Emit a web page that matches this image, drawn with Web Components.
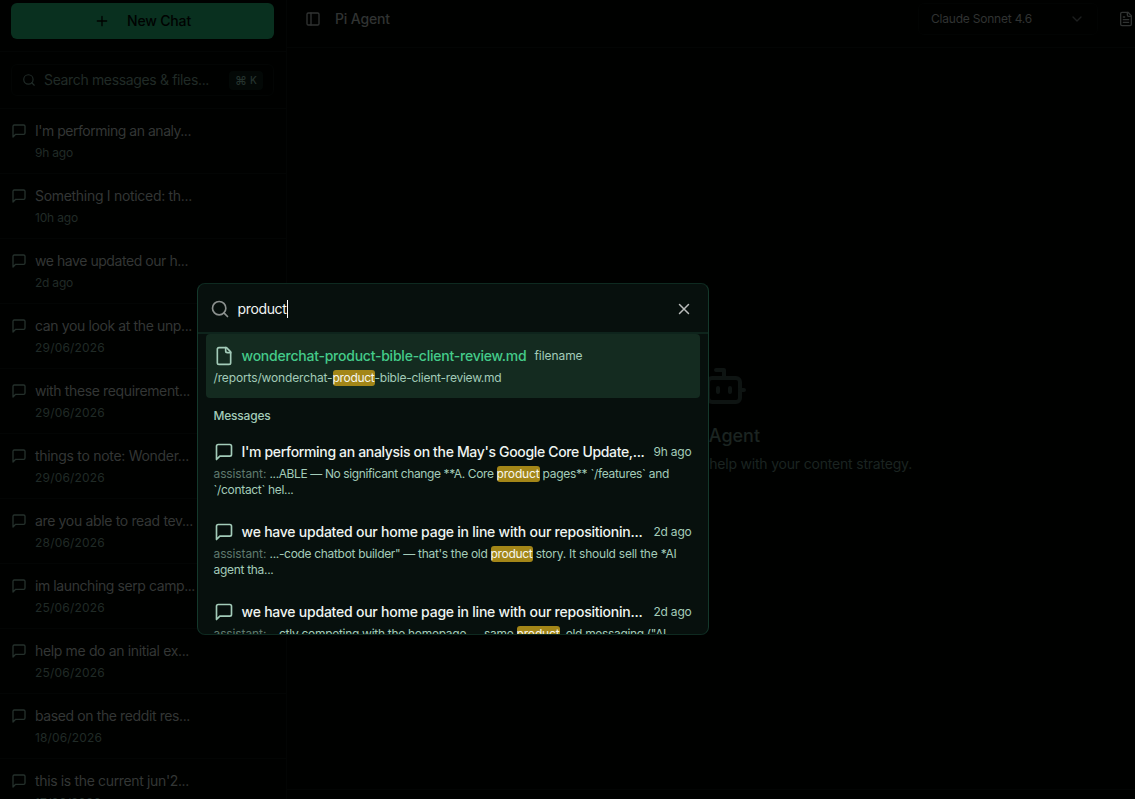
<!DOCTYPE html>
<html lang="en">
<head>
<meta charset="utf-8">
<title>Pi Agent</title>
<style>
  html, body {
    margin: 0;
    height: 100%;
    overflow: hidden;
    background: #000100;
    font-family: Inter, "Liberation Sans", sans-serif;
    font-size: 14px;
    line-height: 20px;
  }
</style>
</head>
<body>
<chat-app></chat-app>

<script>
const ICONS = {
  plus: '<path d="M5 12h14M12 5v14"/>',
  search: '<circle cx="11" cy="11" r="8"/><path d="m21 21-4.3-4.3"/>',
  message: '<path d="M21 15a2 2 0 0 1-2 2H7l-4 4V5a2 2 0 0 1 2-2h14a2 2 0 0 1 2 2z"/>',
  panel: '<rect width="18" height="18" x="3" y="3" rx="2"/><path d="M9 3v18"/>',
  chevron: '<path d="m6 9 6 6 6-6"/>',
  file: '<path d="M15 2H6a2 2 0 0 0-2 2v16a2 2 0 0 0 2 2h12a2 2 0 0 0 2-2V7Z"/><path d="M14 2v4a2 2 0 0 0 2 2h4"/>',
  doc: '<path d="M15 2H6a2 2 0 0 0-2 2v16a2 2 0 0 0 2 2h12a2 2 0 0 0 2-2V7Z"/><path d="M14 2v4a2 2 0 0 0 2 2h4M10 9H8M16 13H8M16 17H8"/>',
  close: '<path d="M18 6 6 18M6 6l12 12"/>',
  bot: '<path d="M12 8V4H8"/><rect width="16" height="12" x="4" y="8" rx="2"/><path d="M2 14h2M20 14h2M15 13v2M9 13v2"/>'
};

class UiIcon extends HTMLElement {
  constructor() {
    super();
    this.attachShadow({ mode: 'open' });
  }

  connectedCallback() {
    const size = this.getAttribute('size') || 16;
    this.shadowRoot.innerHTML = `
      <style>
        :host { display: block; flex: none; width: ${size}px; height: ${size}px; }
        svg { display: block; }
      </style>
      <svg width="${size}" height="${size}" viewBox="0 0 24 24" fill="none" stroke="currentColor"
        stroke-width="2" stroke-linecap="round" stroke-linejoin="round">${ICONS[this.getAttribute('name')]}</svg>
    `;
  }
}

// A run of text tracked in or out so that it fills its width
class FitText extends HTMLElement {
  constructor() {
    super();
    this.attachShadow({ mode: 'open' });
    this.shadowRoot.innerHTML = `
      <style>
        :host { display: block; flex: none; }
        span { display: inline-block; vertical-align: top; margin-left: var(--nudge, 0); white-space: pre; }
      </style>
      <span><slot></slot></span>
    `;
  }

  connectedCallback() {
    const width = parseFloat(this.getAttribute('w'));
    this.style.width = width + 'px';
    const natural = this.shadowRoot.querySelector('span').getBoundingClientRect().width;
    const count = this.textContent.length;
    this.style.letterSpacing = (width - natural) / count + 'px';
  }
}

class ChatRow extends HTMLElement {
  constructor() {
    super();
    this.attachShadow({ mode: 'open' });
  }

  connectedCallback() {
    this.shadowRoot.innerHTML = `
      <style>
        :host {
          display: flex;
          gap: 8px;
          padding: 12px 11px;
          border-bottom: 1px solid #030504;
          color: #333635;
        }
        ui-icon { margin-top: 2px; color: #24302b; }
        .when { margin-top: 4px; font-size: 12px; line-height: 16px; color: #202b27; }
      </style>
      <ui-icon name="message"></ui-icon>
      <div>
        <fit-text w="${this.getAttribute('tw')}">${this.getAttribute('label')}</fit-text>
        <fit-text class="when" w="${this.getAttribute('dw')}">${this.getAttribute('when')}</fit-text>
      </div>
    `;
  }
}

class ChatSidebar extends HTMLElement {
  constructor() {
    super();
    this.attachShadow({ mode: 'open' });
  }

  connectedCallback() {
    const chats = [
      ["I'm performing an analy...", 156, '9h ago', 38],
      ['Something I noticed: th...', 157, '10h ago', 43],
      ['we have updated our h...', 153, '2d ago', 38],
      ['can you look at the unp...', 157, '29/06/2026', 70],
      ['with these requirement...', 155, '29/06/2026', 70],
      ['things to note: Wonder...', 154, '29/06/2026', 70],
      ['are you able to read tev...', 158, '28/06/2026', 70],
      ['im launching serp camp...', 160, '25/06/2026', 70],
      ['help me do an initial ex...', 154, '25/06/2026', 70],
      ['based on the reddit res...', 155, '18/06/2026', 67],
      ["this is the current jun'2...", 154, '17/06/2026', 66]
    ];
    this.shadowRoot.innerHTML = `
      <style>
        :host {
          display: block;
          box-sizing: border-box;
          flex: none;
          width: 287px;
          border-right: 1px solid #030504;
          overflow: hidden;
        }
        .top { padding: 3px 12px 12px 11px; border-bottom: 1px solid #030504; }
        button {
          display: flex;
          align-items: center;
          justify-content: center;
          gap: 17px;
          width: 263px;
          height: 36px;
          padding: 0;
          border: 0;
          border-radius: 6px;
          background: #09301f;
          color: #000201;
          font: 500 14px/20px Inter, "Liberation Sans", sans-serif;
        }
        .find { padding: 12px 12px 12px 11px; border-bottom: 1px solid #030504; }
        .box {
          display: flex;
          align-items: center;
          box-sizing: border-box;
          height: 32px;
          padding: 0 10px;
          border: 1px solid #030504;
          border-radius: 6px;
          color: #202b27;
        }
        .box > fit-text { margin-left: 8px; }
        kbd {
          display: flex;
          align-items: center;
          justify-content: center;
          gap: 3px;
          width: 34px;
          height: 19px;
          margin-left: auto;
          border-radius: 4px;
          background: #030806;
          color: #25332e;
          font: 500 10px/19px Inter, "Liberation Sans", sans-serif;
        }
        .cmd { font-size: 12px; }
      </style>
      <div class="top">
        <button><ui-icon name="plus"></ui-icon><fit-text w="64">New Chat</fit-text></button>
      </div>
      <div class="find">
        <div class="box">
          <ui-icon name="search" size="14"></ui-icon>
          <fit-text w="165">Search messages &amp; files...</fit-text>
          <kbd><span class="cmd">⌘</span><span>K</span></kbd>
        </div>
      </div>
      ${chats.map(([label, tw, when, dw]) =>
        `<chat-row label="${label}" tw="${tw}" when="${when}" dw="${dw}"></chat-row>`).join('')}
    `;
  }
}

class ChatMain extends HTMLElement {
  constructor() {
    super();
    this.attachShadow({ mode: 'open' });
    this.shadowRoot.innerHTML = `
      <style>
        :host { display: flex; flex-direction: column; flex: none; width: 874px; }
        header {
          display: flex;
          align-items: center;
          box-sizing: border-box;
          height: 48px;
          padding: 0 27px 9px 18px;
          border-bottom: 1px solid #030504;
          color: #303332;
        }
        .name { margin-left: 14px; font-weight: 500; }
        .model {
          display: flex;
          align-items: center;
          justify-content: space-between;
          box-sizing: border-box;
          width: 180px;
          height: 32px;
          margin-left: auto;
          margin-right: 20px;
          padding: 0 12px;
          border: 1px solid #020403;
          border-radius: 6px;
          font-size: 12px;
        }
        .model ui-icon { color: #1c1f1e; }
        .empty {
          display: flex;
          flex-direction: column;
          align-items: center;
          flex: 1;
          padding-top: 314px;
          color: #1b2421;
        }
        .empty ui-icon { color: #0e1412; }
        h2 { margin: 12px 0 4px; font: 500 18px/28px Inter, "Liberation Sans", sans-serif; }
        footer { height: 9px; border-top: 1px solid #030504; }
      </style>
      <header>
        <ui-icon name="panel"></ui-icon>
        <fit-text class="name" w="55">Pi Agent</fit-text>
        <div class="model"><fit-text w="101">Claude Sonnet 4.6</fit-text><ui-icon name="chevron"></ui-icon></div>
        <ui-icon name="doc"></ui-icon>
      </header>
      <div class="empty">
        <ui-icon name="bot" size="48"></ui-icon>
        <h2><fit-text w="72">Pi Agent</fit-text></h2>
        <fit-text w="376">Start a conversation to get help with your content strategy.</fit-text>
      </div>
      <footer></footer>
    `;
  }
}

class SearchResult extends HTMLElement {
  constructor() {
    super();
    this.attachShadow({ mode: 'open' });
    this.shadowRoot.innerHTML = `
      <style>
        :host { display: block; padding: 12px 8px; border-radius: 4px; color: #a3ccb9; }
        :host([active]) { background: #142b20; }
        .head { display: flex; align-items: center; gap: 8px; height: 20px; }
        ::slotted([slot="title"]) { color: #eef4f1; font-weight: 500; }
        :host([active]) ::slotted([slot="title"]) { color: #44cb8a; }
        ::slotted([slot="meta"]) { font-size: 12px; line-height: 16px; }
        :host(:not([active])) ::slotted([slot="meta"]) { margin-left: auto; }
        .text { margin-top: 4px; font-size: 12px; line-height: 16px; }
      </style>
      <div class="head">
        <slot name="icon"></slot>
        <slot name="title"></slot>
        <slot name="meta"></slot>
      </div>
      <div class="text"><slot></slot></div>
    `;
  }
}

class SearchDialog extends HTMLElement {
  constructor() {
    super();
    this.attachShadow({ mode: 'open' });
    this.shadowRoot.innerHTML = `
      <style>
        /* floats over the dimmed app */
        :host {
          --nudge: -0.5px;
          position: absolute;
          left: 197px;
          top: 283px;
          display: flex;
          flex-direction: column;
          box-sizing: border-box;
          width: 512px;
          height: 352px;
          border: 1px solid #14382b;
          border-top-color: #0e2a20;
          border-bottom-color: #0e2a20;
          border-radius: 8px;
          background: #07100d;
          overflow: hidden;
        }
        .field {
          display: flex;
          align-items: center;
          box-sizing: border-box;
          flex: none;
          height: 50px;
          padding: 1px 15px 0 12px;
          border-bottom: 2px solid #0e241c;
          color: #8b908e;
        }
        .query { margin-left: 8px; color: #f0f4f2; }
        .caret { width: 1px; height: 18px; background: #fff; }
        .close { margin-left: auto; color: #b9bcbb; }
        .list { flex: 1; padding: 0 8px; overflow: hidden; }
        h3 { margin: 0; padding: 10px 8px 6px; font: 500 12px/16px Inter, "Liberation Sans", sans-serif; color: #a3ccb9; }
        .line { display: flex; }
        .dim { color: #5f7a6e; }
        mark { border-radius: 3px; background: #a38618; color: #f6f7ee; }
      </style>
      <div class="field">
        <ui-icon name="search" size="20"></ui-icon>
        <fit-text class="query" w="49">product</fit-text><span class="caret"></span>
        <ui-icon class="close" name="close" size="18"></ui-icon>
      </div>
      <div class="list">
        <search-result active>
          <ui-icon slot="icon" name="file" size="20"></ui-icon>
          <fit-text slot="title" w="285">wonderchat-product-bible-client-review.md</fit-text>
          <fit-text slot="meta" w="48">filename</fit-text>
          <div class="line"><fit-text w="119">/reports/wonderchat-</fit-text><mark><fit-text w="42">product</fit-text></mark><fit-text w="127">-bible-client-review.md</fit-text></div>
        </search-result>
        <h3><fit-text w="57">Messages</fit-text></h3>
        <search-result>
          <ui-icon slot="icon" name="message" size="20"></ui-icon>
          <fit-text slot="title" w="403">I'm performing an analysis on the May's Google Core Update,...</fit-text>
          <fit-text slot="meta" w="38">9h ago</fit-text>
          <div class="line"><fit-text class="dim" w="56">assistant: </fit-text><fit-text w="227">...ABLE — No significant change **A. Core </fit-text><mark><fit-text w="43">product</fit-text></mark><fit-text w="129.5"> pages** \`/features\` and</fit-text></div>
          <div class="line"><fit-text w="80">\`/contact\` hel...</fit-text></div>
        </search-result>
        <search-result>
          <ui-icon slot="icon" name="message" size="20"></ui-icon>
          <fit-text slot="title" w="401">we have updated our home page in line with our repositionin...</fit-text>
          <fit-text slot="meta" w="38">2d ago</fit-text>
          <div class="line"><fit-text class="dim" w="56">assistant: </fit-text><fit-text w="221">...-code chatbot builder" — that's the old </fit-text><mark><fit-text w="42">product</fit-text></mark><fit-text w="144"> story. It should sell the *AI</fit-text></div>
          <div class="line"><fit-text w="60">agent tha...</fit-text></div>
        </search-result>
        <search-result>
          <ui-icon slot="icon" name="message" size="20"></ui-icon>
          <fit-text slot="title" w="401">we have updated our home page in line with our repositionin...</fit-text>
          <fit-text slot="meta" w="38">2d ago</fit-text>
          <div class="line"><fit-text class="dim" w="56">assistant: </fit-text><fit-text w="247">...ctly competing with the homepage — same </fit-text><mark><fit-text w="43">product</fit-text></mark><fit-text w="106.5">, old messaging ("AI</fit-text></div>
        </search-result>
      </div>
    `;
  }
}

class ChatApp extends HTMLElement {
  constructor() {
    super();
    this.attachShadow({ mode: 'open' });
    this.shadowRoot.innerHTML = `
      <style>
        :host { display: flex; position: relative; height: 799px; overflow: hidden; }
      </style>
      <chat-sidebar></chat-sidebar>
      <chat-main></chat-main>
      <search-dialog></search-dialog>
    `;
  }
}

customElements.define('ui-icon', UiIcon);
customElements.define('fit-text', FitText);
customElements.define('chat-row', ChatRow);
customElements.define('chat-sidebar', ChatSidebar);
customElements.define('chat-main', ChatMain);
customElements.define('search-result', SearchResult);
customElements.define('search-dialog', SearchDialog);
customElements.define('chat-app', ChatApp);
</script>
</body>
</html>
